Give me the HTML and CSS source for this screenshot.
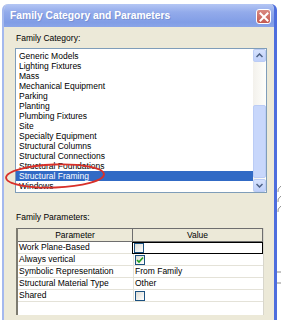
FILE: index.html
```html
<!DOCTYPE html>
<html lang="en">
<head>
    <meta charset="UTF-8">
    <title>Family Category and Parameters</title>
    <link rel="stylesheet" href="styles.css">
</head>
<body>
    <div class="window">
        <div class="titlebar">
            <span class="title">Family Category and Parameters</span>
            <div class="close-btn">
                <svg width="10" height="10" viewBox="0 0 10 10"><path d="M1.5 1.5 L8.5 8.5 M8.5 1.5 L1.5 8.5" stroke="#fff" stroke-width="2" stroke-linecap="square"/></svg>
            </div>
        </div>
        <div class="client">
            <div class="label">Family Category:</div>
            <div class="listbox">
                <div class="items">
                    <div class="item">Generic Models</div>
                    <div class="item">Lighting Fixtures</div>
                    <div class="item">Mass</div>
                    <div class="item">Mechanical Equipment</div>
                    <div class="item">Parking</div>
                    <div class="item">Planting</div>
                    <div class="item">Plumbing Fixtures</div>
                    <div class="item">Site</div>
                    <div class="item">Specialty Equipment</div>
                    <div class="item">Structural Columns</div>
                    <div class="item">Structural Connections</div>
                    <div class="item">Structural Foundations</div>
                    <div class="item selected">Structural Framing</div>
                    <div class="item">Windows</div>
                </div>
                <div class="scrollbar">
                    <div class="sb-btn">
                        <svg width="7" height="5" viewBox="0 0 7 5"><path d="M0.5 4 L3.5 1 L6.5 4" fill="none" stroke="#4D6185" stroke-width="1.5"/></svg>
                    </div>
                    <div class="sb-gap"></div>
                    <div class="sb-thumb"></div>
                    <div class="sb-btn">
                        <svg width="7" height="5" viewBox="0 0 7 5"><path d="M0.5 1 L3.5 4 L6.5 1" fill="none" stroke="#4D6185" stroke-width="1.5"/></svg>
                    </div>
                </div>
                <svg class="circle-mark" width="104" height="32" viewBox="0 0 104 32">
                    <ellipse cx="52" cy="16" rx="49" ry="11.5" fill="none" stroke="#D8302A" stroke-width="1.8" transform="rotate(-2 52 16)"/>
                </svg>
            </div>

            <div class="label params-label">Family Parameters:</div>
            <div class="params">
                <div class="head">Parameter</div>
                <div class="head">Value</div>

                <div class="cell">Work Plane-Based</div>
                <div class="cell value editing"><span class="check"></span></div>

                <div class="cell">Always vertical</div>
                <div class="cell value">
                    <span class="check">
                        <svg width="8" height="8" viewBox="0 0 8 8"><path d="M1 4 L3 6 L7 1.5" fill="none" stroke="#21A121" stroke-width="1.6"/></svg>
                    </span>
                </div>

                <div class="cell">Symbolic Representation</div>
                <div class="cell value">From Family</div>

                <div class="cell">Structural Material Type</div>
                <div class="cell value">Other</div>

                <div class="cell">Shared</div>
                <div class="cell value"><span class="check"></span></div>

                <div class="filler"></div>
            </div>
        </div>
    </div>
    <div class="behind">
        <svg width="4" height="320" viewBox="0 0 4 320">
            <path d="M4 186 Q0 189 1 192 M4 196 Q0 199 1 202 M4 206 Q0 209 1 212" fill="none" stroke="#777" stroke-width="0.8"/>
            <path d="M0 272 H4 M0 283 H4" stroke="#888" stroke-width="1"/>
        </svg>
    </div>
</body>
</html>
```

FILE: styles.css
```css
body {
    margin: 0;
    background: #fff;
    display: flex;
    font-family: "Liberation Sans", Arial, sans-serif;
    font-size: 8.5px;
    color: #000;
}
.window {
    margin: 4px 0 0 2px;
    width: 275px;
    height: 316px;
    box-sizing: border-box;
    display: flex;
    flex-direction: column;
    background: #ECE9D8;
    border-left: 2px solid #A4B8EE;
    border-right: 3px solid #4E6EDD;
    border-radius: 6px 6px 0 0;
    overflow: hidden;
}
.titlebar {
    height: 23px;
    flex-shrink: 0;
    display: flex;
    align-items: center;
    justify-content: space-between;
    padding: 0 3px 0 6px;
    background: linear-gradient(#B4C6F4, #93ABEB 35%, #819DE6 80%, #8AA4E8);
}
.title {
    color: #fff;
    font-weight: bold;
    font-size: 10.3px;
    text-shadow: 1px 1px 0 #7890D2;
}
.close-btn {
    width: 15px;
    height: 15px;
    margin-top: 2px;
    box-sizing: border-box;
    border: 1px solid #fff;
    border-radius: 3px;
    background: linear-gradient(#D98A82, #C55A50);
    display: flex;
    align-items: center;
    justify-content: center;
}
.client {
    padding: 6px 0 0 11px;
}
.label {
    height: 10px;
    line-height: 10px;
    padding-left: 1px;
    margin-bottom: 5px;
}
.listbox {
    position: relative;
    width: 252px;
    height: 145px;
    box-sizing: border-box;
    border: 1px solid #7F9DB9;
    background: #fff;
    display: flex;
}
.items {
    flex: 1;
    padding-top: 2px;
    overflow: hidden;
}
.item {
    height: 10px;
    line-height: 10px;
    padding-left: 3px;
    white-space: nowrap;
}
.item.selected {
    background: #316AC5;
    color: #fff;
}
.scrollbar {
    width: 13px;
    display: flex;
    flex-direction: column;
    background: linear-gradient(90deg, #F3F1EC, #FEFEFB);
}
.sb-btn {
    height: 13px;
    box-sizing: border-box;
    border: 1px solid #BBCCF5;
    border-radius: 2px;
    background: linear-gradient(#D6E2FD, #BFD0FA);
    display: flex;
    align-items: center;
    justify-content: center;
}
.sb-gap {
    height: 43px;
}
.sb-thumb {
    flex: 1;
    margin-bottom: 1px;
    border-radius: 2px;
    background: #C8D7FB;
    border: 1px solid #BBCCF5;
}
.circle-mark {
    position: absolute;
    left: -13px;
    top: 111px;
}
.params-label {
    margin-top: 19px;
    margin-bottom: 6px;
}
.params {
    margin-left: 1px;
    width: 248px;
    box-sizing: border-box;
    display: grid;
    grid-template-columns: 115px 1fr;
    grid-template-rows: 14px repeat(5, 12px) 13px;
    border-left: 2px solid #7D7B70;
    border-right: 1px solid #D8D6CC;
    background: #fff;
}
.head {
    background: #ECE9D8;
    border-top: 1px solid #6E6E6E;
    border-bottom: 1px solid #6E6E6E;
    border-right: 1px solid #6E6E6E;
    text-align: center;
    line-height: 12px;
}
.cell {
    border-bottom: 1px solid #E4E2D8;
    line-height: 11px;
    padding-left: 1px;
    white-space: nowrap;
    overflow: hidden;
    display: flex;
    align-items: center;
}
.value {
    border-left: 1px solid #E4E2D8;
    padding-left: 1px;
}
.value.editing {
    border: 1px solid #000;
    margin-left: -1px;
}
.check {
    width: 10px;
    height: 10px;
    box-sizing: border-box;
    border: 1px solid #1C5180;
    background: linear-gradient(135deg, #DCDBD4, #fff);
    display: flex;
    align-items: center;
    justify-content: center;
}
.filler {
    grid-column: 1 / 3;
}
.behind {
    width: 4px;
}
```
